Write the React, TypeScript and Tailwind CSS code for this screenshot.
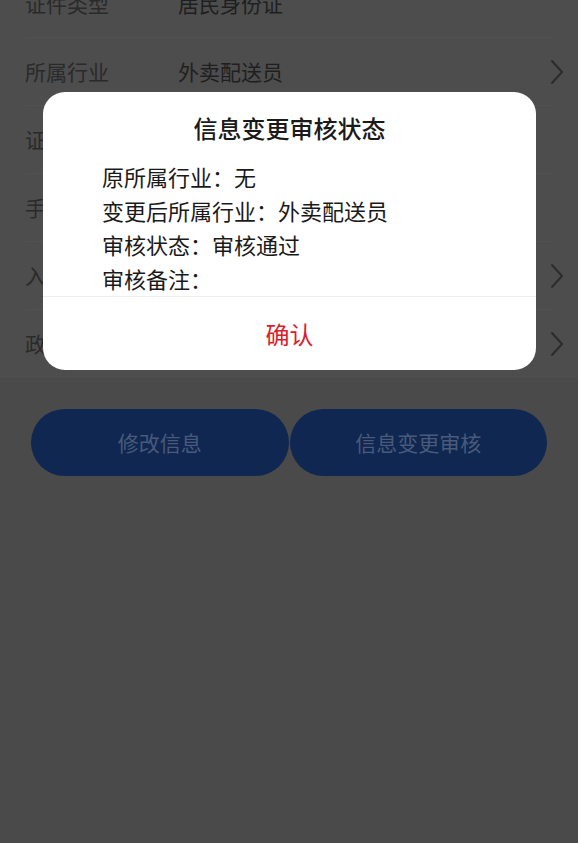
const rows = [
  { label: "证件类型", value: "居民身份证", arrow: false },
  { label: "所属行业", value: "外卖配送员", arrow: true },
  { label: "证件号码", value: "", arrow: false },
  { label: "手机号码", value: "", arrow: false },
  { label: "入职时间", value: "", arrow: true },
  { label: "政治面貌", value: "", arrow: true },
];

const lines = [
  { k: "原所属行业", v: "无" },
  { k: "变更后所属行业", v: "外卖配送员" },
  { k: "审核状态", v: "审核通过" },
  { k: "审核备注", v: "" },
];

function Chevron() {
  return (
    <svg width="16" height="26" viewBox="0 0 16 26" fill="none" className="shrink-0">
      <path d="M3 2 L13 13 L3 24" stroke="#2c2c2c" strokeWidth="2" strokeLinecap="round" strokeLinejoin="round" />
    </svg>
  );
}

export default function App() {
  return (
    <div
      className="relative min-h-[843px] w-full overflow-hidden bg-[#4a4a4a]"
      style={{ fontFamily: '"Noto Sans CJK SC", "Noto Sans", sans-serif' }}
    >
      {/* dimmed page behind the dialog */}
      <div className="-mt-[30px] bg-[#4d4d4d]">
        {rows.map((r, i) => (
          <div key={r.label} className="px-[25px]">
            <div
              className={`flex h-[68px] items-center ${
                i < rows.length - 1 ? "border-b border-[#525252]" : ""
              }`}
            >
              <span className="w-[153px] text-[21px] text-[#2a2a2a]">{r.label}</span>
              <span className="flex-1 text-[21px] text-[#1f1f1f]">{r.value}</span>
              {r.arrow && (
                <span className="-mr-[12px]">
                  <Chevron />
                </span>
              )}
            </div>
          </div>
        ))}
      </div>

      <div className="mt-[31px] flex gap-px px-[31px]">
        <button className="flex h-[67px] flex-1 items-center justify-center rounded-full bg-[#0f2751] text-[21px] text-[#4a5a7a]">
          修改信息
        </button>
        <button className="flex h-[67px] flex-1 items-center justify-center rounded-full bg-[#0f2751] text-[21px] text-[#4a5a7a]">
          信息变更审核
        </button>
      </div>

      {/* dialog */}
      <div className="absolute left-[43px] top-[92px] w-[493px] overflow-hidden rounded-[22px] bg-white">
        <div className="pt-[18px] text-center text-[24px] font-medium leading-[36px] text-[#1a1a1a]">
          信息变更审核状态
        </div>
        <div className="h-[150px] overflow-hidden pl-[59px] pt-[13px]">
          {lines.map((l) => (
            <div key={l.k} className="text-[22px] leading-[34px] text-[#1a1a1a]">
              {l.k}：{l.v}
            </div>
          ))}
        </div>
        <div className="border-t border-[#eeeeee]">
          <button className="flex h-[73px] w-full items-center justify-center text-[24px] text-[#d9202c]">
            确认
          </button>
        </div>
      </div>
    </div>
  );
}
